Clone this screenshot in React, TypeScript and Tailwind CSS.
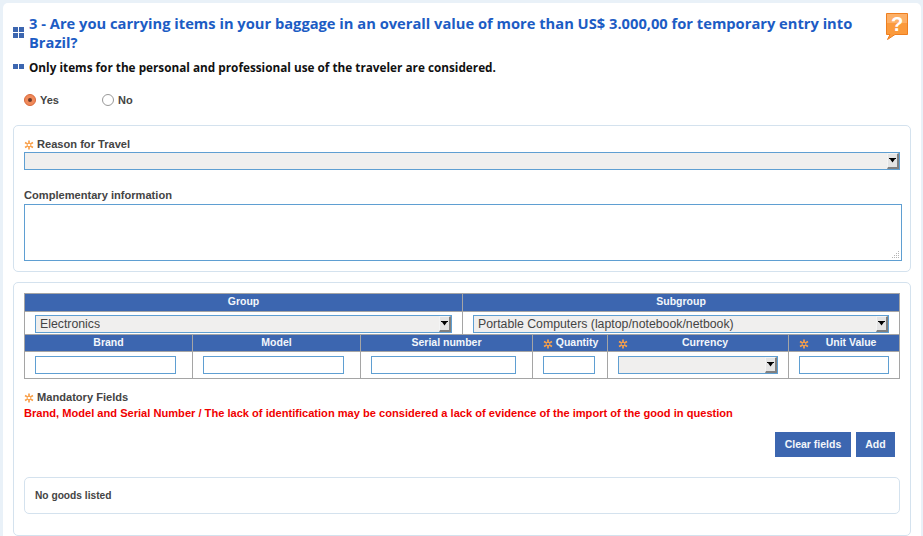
const sans = "font-['Liberation_Sans',Arial,sans-serif]";

function Star({ className = "" }: { className?: string }) {
  return (
    <svg width="10" height="10" viewBox="0 0 10 10" className={className}>
      <g stroke="#f9a04a" strokeWidth="1.7">
        <path d="M5 0.5V4M5 6V9.5M1 2.6L4 4.2M6 5.8L9 7.4M1 7.4L4 5.8M6 4.2L9 2.6" />
      </g>
    </svg>
  );
}

function Select({ value, className = "" }: { value?: string; className?: string }) {
  return (
    <div className={`h-[18px] flex items-center justify-between bg-[#f0efee] border border-[#5f9fd2] pl-1 text-[12.3px] text-[#444] ${className}`}>
      <span className="truncate">{value}</span>
      <span className="w-[12px] h-[16px] shrink-0 bg-[#e4e4e4] border-l border-t border-[#f4f4f4] border-r-2 border-r-[#808080] border-b-2 border-b-[#808080] flex items-center justify-center">
        <svg width="7" height="5" viewBox="0 0 7 5">
          <path d="M0 0H7V1H6L3.5 4.5L1 1H0Z" fill="#000" />
        </svg>
      </span>
    </div>
  );
}

function Head({ children, colSpan, star }: { children: string; colSpan?: number; star?: boolean }) {
  return (
    <th colSpan={colSpan} className="relative h-[17px] p-0 pb-[2px] border border-[#a5a5a5] bg-[#3c66b0] text-[10.5px] font-bold text-[#f2f6fb] text-center leading-none">
      {star && <Star className="absolute top-[4px] left-[10px]" />}
      <span className={star ? "pl-[14px]" : ""}>{children}</span>
    </th>
  );
}

function Field({ width }: { width: string }) {
  return <input className={`block h-[18px] bg-white border border-[#5f9fd2] ${width}`} />;
}

export default function App() {
  return (
    <div className={`min-h-[536px] bg-[#e9f1f8] pl-[3px] pr-[2px] pt-[3px] overflow-hidden ${sans}`}>
      <div className="bg-white rounded-t-[5px] h-[533px] pl-[10px] pr-[10px]">
        {/* Question */}
        <div className="flex items-center pt-[11px]">
          <div className="w-[16px] shrink-0 -mt-[2px]">
            <div className="grid grid-cols-2 gap-[1px] w-[11px]">
              <i className="h-[5px] bg-[#3c66b0]" />
              <i className="h-[5px] bg-[#3c66b0]" />
              <i className="h-[5px] bg-[#3c66b0]" />
              <i className="h-[5px] bg-[#3c66b0]" />
            </div>
          </div>
          <h1 className="font-['Open_Sans',sans-serif] w-[830px] text-[14.7px] font-bold leading-[19px] text-[#1c5cc4]">
            3 - Are you carrying items in your baggage in an overall value of more than US$ 3.000,00 for temporary entry into Brazil?
          </h1>
          <svg width="22" height="27" viewBox="0 0 22 27" className="ml-auto mr-[3px] self-start -mt-[1px]">
            <path d="M0.5 0.5H21.5V21.5H9L1.5 26.5L4 21.5H0.5Z" fill="#fb9a3c" stroke="#ee7f20" />
            <path d="M1 1H21V10H1Z" fill="#fdb067" />
            <text x="11" y="18" textAnchor="middle" fontSize="20" fontWeight="700" fill="#fff" fontFamily="Liberation Sans">?</text>
          </svg>
        </div>
        <div className="flex items-center mt-[6px]">
          <div className="w-[16px] shrink-0 flex gap-[1px] -mt-[2px]">
            <i className="w-[5px] h-[5px] bg-[#3c66b0]" />
            <i className="w-[5px] h-[5px] bg-[#3c66b0]" />
          </div>
          <p className="font-['Open_Sans',sans-serif] text-[11.77px] font-bold leading-[18px] text-[#111]">
            Only items for the personal and professional use of the traveler are considered.
          </p>
        </div>

        {/* Yes / No */}
        <div className="flex items-center h-[14px] mt-[17px] pl-[11px] text-[11px] font-bold text-[#444]">
          <span className="w-[12px] h-[12px] rounded-full bg-[#f08a5a] border border-[#d9683a] flex items-center justify-center">
            <i className="w-[4px] h-[4px] rounded-full bg-[#6b3a2a]" />
          </span>
          <span className="ml-[4px] w-[62px]">Yes</span>
          <span className="w-[12px] h-[12px] rounded-full bg-white border border-[#999]" />
          <span className="ml-[4px]">No</span>
        </div>

        {/* Travel reason */}
        <section className="mt-[18px] h-[147px] border border-[#d4e2ee] rounded-[5px] px-[10px] pt-[12px]">
          <label className="flex items-center gap-[3px] h-[13px] text-[11.1px] font-bold text-[#444]">
            <Star />
            Reason for Travel
          </label>
          <Select className="mt-[1px] w-[876px]" />
          <label className="block mt-[19px] h-[13px] text-[11.1px] font-bold leading-[13px] text-[#444]">
            Complementary information
          </label>
          <div className="relative mt-[2px] w-[878px] h-[57px]">
            <textarea className="block w-full h-full resize-none border border-[#5f9fd2]" />
            <svg width="8" height="8" viewBox="0 0 8 8" className="absolute right-[2px] bottom-[2px]">
              <path d="M6 0h1v1H6zM4 2h1v1H4zM6 2h1v1H6zM2 4h1v1H2zM4 4h1v1H4zM6 4h1v1H6zM0 6h1v1H0zM2 6h1v1H2zM4 6h1v1H4zM6 6h1v1H6z" fill="#b5b5b5" />
            </svg>
          </div>
        </section>

        {/* Goods */}
        <section className="mt-[10px] h-[254px] border border-[#d4e2ee] rounded-[5px] px-[10px] pt-[10px]">
          <table className="table-fixed border-collapse w-[875px]">
            <colgroup>
              <col className="w-[168px]" />
              <col className="w-[168px]" />
              <col className="w-[102px]" />
              <col className="w-[70px]" />
              <col className="w-[75px]" />
              <col className="w-[181px]" />
              <col className="w-[111px]" />
            </colgroup>
            <tbody>
              <tr className="h-[18px]">
                <Head colSpan={3}>Group</Head>
                <Head colSpan={4}>Subgroup</Head>
              </tr>
              <tr>
                <td colSpan={3} className="h-[23px] p-0 pl-[10px] pt-[3px] align-top border-x border-[#a5a5a5]">
                  <Select value="Electronics" className="w-[417px]" />
                </td>
                <td colSpan={4} className="h-[23px] p-0 pl-[10px] pt-[3px] align-top border-x border-[#a5a5a5]">
                  <Select value="Portable Computers (laptop/notebook/netbook)" className="w-[416px]" />
                </td>
              </tr>
              <tr>
                <Head>Brand</Head>
                <Head>Model</Head>
                <Head colSpan={2}>Serial number</Head>
                <Head star>Quantity</Head>
                <Head star>Currency</Head>
                <Head star>Unit Value</Head>
              </tr>
              <tr>
                <td className="h-[27px] p-0 pl-[10px] border border-[#a5a5a5]"><Field width="w-[141px]" /></td>
                <td className="p-0 pl-[10px] border border-[#a5a5a5]"><Field width="w-[141px]" /></td>
                <td colSpan={2} className="p-0 pl-[10px] border border-[#a5a5a5]"><Field width="w-[145px]" /></td>
                <td className="p-0 pl-[10px] border border-[#a5a5a5]"><Field width="w-[52px]" /></td>
                <td className="p-0 pl-[10px] border border-[#a5a5a5]"><Select className="w-[160px]" /></td>
                <td className="p-0 pl-[10px] border border-[#a5a5a5]"><Field width="w-[90px]" /></td>
              </tr>
            </tbody>
          </table>

          <p className="flex items-center gap-[3px] mt-[12px] h-[13px] text-[11.1px] font-bold text-[#444]">
            <Star />
            Mandatory Fields
          </p>
          <p className="mt-[3px] h-[13px] text-[11.1px] font-bold leading-[13px] text-[#f00000]">
            Brand, Model and Serial Number / The lack of identification may be considered a lack of evidence of the import of the good in question
          </p>

          <div className="flex justify-end gap-[5px] mt-[12px] pr-[5px]">
            <button className="w-[76px] h-[25px] bg-[#3c66b0] text-[10.5px] font-bold text-[#f2f6fb]">Clear fields</button>
            <button className="w-[39px] h-[25px] bg-[#3c66b0] text-[10.5px] font-bold text-[#f2f6fb]">Add</button>
          </div>

          <div className="mt-[20px] w-[876px] h-[37px] flex items-center px-[10px] border border-[#d4e2ee] rounded-[5px] text-[10.2px] font-bold text-[#444]">
            No goods listed
          </div>
        </section>
      </div>
    </div>
  );
}
